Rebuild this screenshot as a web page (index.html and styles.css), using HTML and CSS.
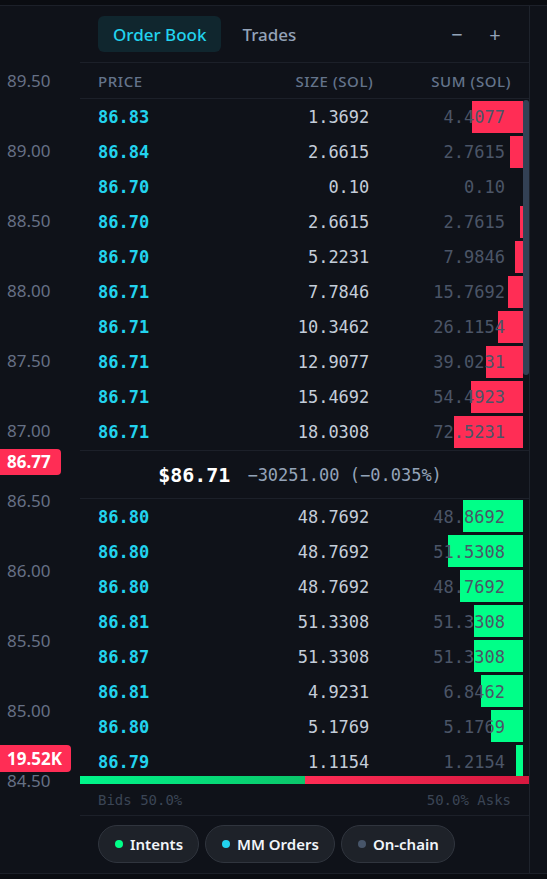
FILE: index.html
```html
<!DOCTYPE html>
<html lang="en">
  <head>
    <meta charset="UTF-8" />
    <meta name="viewport" content="width=device-width, initial-scale=1.0" />
    <title>Order Book</title>
    <link rel="stylesheet" href="styles.css">
  </head>
  <body>
    <div class="screen">
      <aside class="axis">
        <span class="tick">89.50</span>
        <span class="tick">89.00</span>
        <span class="tick">88.50</span>
        <span class="tick">88.00</span>
        <span class="tick">87.50</span>
        <span class="tick">87.00</span>
        <span class="tick">86.50</span>
        <span class="tick">86.00</span>
        <span class="tick">85.50</span>
        <span class="tick">85.00</span>
        <span class="tick">84.50</span>
        <span class="tag tag-price">86.77</span>
        <span class="tag tag-vol">19.52K</span>
      </aside>

      <section class="book">
        <header class="book-tabs">
          <button class="tab active">Order Book</button>
          <button class="tab">Trades</button>
          <div class="zoom-btns">
            <button>−</button>
            <button>+</button>
          </div>
        </header>

        <div class="cols">
          <span>PRICE</span>
          <span>SIZE (SOL)</span>
          <span>SUM (SOL)</span>
        </div>

        <div class="asks-wrap">
          <div class="rows asks">
            <div class="row"><i class="depth" style="width:51px"></i><span class="price">86.83</span><span class="size">1.3692</span><span class="sum">4.4077</span></div>
            <div class="row"><i class="depth" style="width:13px"></i><span class="price">86.84</span><span class="size">2.6615</span><span class="sum">2.7615</span></div>
            <div class="row"><i class="depth" style="width:0px"></i><span class="price">86.70</span><span class="size">0.10</span><span class="sum">0.10</span></div>
            <div class="row"><i class="depth" style="width:3px"></i><span class="price">86.70</span><span class="size">2.6615</span><span class="sum">2.7615</span></div>
            <div class="row"><i class="depth" style="width:8px"></i><span class="price">86.70</span><span class="size">5.2231</span><span class="sum">7.9846</span></div>
            <div class="row"><i class="depth" style="width:15px"></i><span class="price">86.71</span><span class="size">7.7846</span><span class="sum">15.7692</span></div>
            <div class="row"><i class="depth" style="width:25px"></i><span class="price">86.71</span><span class="size">10.3462</span><span class="sum">26.1154</span></div>
            <div class="row"><i class="depth" style="width:37px"></i><span class="price">86.71</span><span class="size">12.9077</span><span class="sum">39.0231</span></div>
            <div class="row"><i class="depth" style="width:52px"></i><span class="price">86.71</span><span class="size">15.4692</span><span class="sum">54.4923</span></div>
            <div class="row"><i class="depth" style="width:69px"></i><span class="price">86.71</span><span class="size">18.0308</span><span class="sum">72.5231</span></div>
          </div>
          <div class="scroll"><i class="thumb"></i></div>
        </div>

        <div class="spread">
          <span class="last">$86.71</span>
          <span class="change">−30251.00 (−0.035%)</span>
        </div>

        <div class="rows bids">
          <div class="row"><i class="depth" style="width:60px"></i><span class="price">86.80</span><span class="size">48.7692</span><span class="sum">48.8692</span></div>
          <div class="row"><i class="depth" style="width:75px"></i><span class="price">86.80</span><span class="size">48.7692</span><span class="sum">51.5308</span></div>
          <div class="row"><i class="depth" style="width:63px"></i><span class="price">86.80</span><span class="size">48.7692</span><span class="sum">48.7692</span></div>
          <div class="row"><i class="depth" style="width:49px"></i><span class="price">86.81</span><span class="size">51.3308</span><span class="sum">51.3308</span></div>
          <div class="row"><i class="depth" style="width:49px"></i><span class="price">86.87</span><span class="size">51.3308</span><span class="sum">51.3308</span></div>
          <div class="row"><i class="depth" style="width:42px"></i><span class="price">86.81</span><span class="size">4.9231</span><span class="sum">6.8462</span></div>
          <div class="row"><i class="depth" style="width:32px"></i><span class="price">86.80</span><span class="size">5.1769</span><span class="sum">5.1769</span></div>
          <div class="row"><i class="depth" style="width:7px"></i><span class="price">86.79</span><span class="size">1.1154</span><span class="sum">1.2154</span></div>
        </div>

        <div class="ratio">
          <div class="ratio-bid" style="width:50%"></div>
          <div class="ratio-ask"></div>
        </div>
        <div class="ratio-labels">
          <span>Bids 50.0%</span>
          <span>50.0% Asks</span>
        </div>

        <footer class="sources">
          <span class="chip"><i class="dot dot-intents"></i>Intents</span>
          <span class="chip"><i class="dot dot-mm"></i>MM Orders</span>
          <span class="chip"><i class="dot dot-chain"></i>On-chain</span>
        </footer>
      </section>
    </div>
  </body>
</html>
```

FILE: styles.css
```css
body {
  background-color: #0a0c11;
  margin: 0;
  font-family: "Noto Sans", sans-serif;
}
.screen {
  display: flex;
  height: 867px;
  margin-top: 5px;
  background-color: #0f1219;
  border-top: 1px solid #1c2029;
  border-bottom: 1px solid #1c2029;
}

/* price axis on the left */
.axis {
  position: relative;
  width: 80px;
  padding-top: 40px;
  display: flex;
  flex-direction: column;
}
.tick {
  height: 70px;
  line-height: 70px;
  padding-left: 7px;
  font-size: 17px;
  color: #667085;
}
.tag {
  position: absolute;
  left: 0;
  padding: 0 10px 0 7px;
  background-color: #ff2d55;
  color: white;
  font-size: 17px;
  font-weight: 700;
  border-radius: 0 4px 4px 0;
}
.tag-price {
  top: 443px;
  height: 26px;
  line-height: 26px;
}
.tag-vol {
  top: 739px;
  height: 27px;
  line-height: 27px;
  padding-right: 9px;
}

/* order book panel */
.book {
  width: 449px;
  display: flex;
  flex-direction: column;
  border-right: 1px solid #1e232c;
}
.book-tabs {
  height: 56px;
  display: flex;
  align-items: center;
  gap: 6px;
  padding: 0 20px 0 18px;
  border-bottom: 1px solid #1c2029;
}
.tab {
  height: 36px;
  padding: 0 15px;
  border: none;
  border-radius: 6px;
  background: transparent;
  color: #94a3b8;
  font-family: "Noto Sans", sans-serif;
  font-size: 17px;
  font-weight: 500;
}
.tab.active {
  background-color: rgba(34, 211, 238, 0.1);
  color: #22d3ee;
}
.zoom-btns {
  margin-left: auto;
  display: flex;
  gap: 10px;
}
.zoom-btns button {
  width: 28px;
  height: 28px;
  padding: 0;
  border: none;
  background: transparent;
  color: #94a3b8;
  font-family: "Noto Sans", sans-serif;
  font-size: 20px;
}

.cols {
  height: 35px;
  display: grid;
  grid-template-columns: repeat(3, 1fr);
  align-items: center;
  padding: 0 18px;
  font-size: 15px;
  font-weight: 500;
  letter-spacing: 0.6px;
  color: #64748b;
  border-bottom: 1px solid #1c2029;
}
.cols span + span {
  text-align: right;
}

.rows {
  font-family: "DejaVu Sans Mono", monospace;
  font-size: 17px;
}
.asks-wrap {
  height: 351px;
  display: flex;
}
.asks {
  flex: 1;
  overflow: hidden;
}
.scroll {
  width: 6px;
  padding-top: 1px;
}
.thumb {
  display: block;
  height: 275px;
  background-color: #334155;
  border-radius: 3px;
}
.bids {
  height: 277px;
  overflow: hidden;
  padding-right: 6px;
}
.row {
  position: relative;
  height: 35px;
  display: grid;
  grid-template-columns: repeat(3, 1fr);
  align-items: center;
  padding: 0 18px;
}
.row span {
  position: relative;
}
.depth {
  position: absolute;
  right: 0;
  top: 2px;
  height: 32px;
  background-color: #ff2d55;
}
.bids .depth {
  top: 1px;
  background-color: #00ff88;
}
.price {
  color: #22d3ee;
  font-weight: 700;
}
.size {
  text-align: right;
  color: #c4cdd9;
}
.sum {
  text-align: right;
  color: #4b5567;
}

.spread {
  height: 47px;
  display: flex;
  justify-content: center;
  align-items: center;
  gap: 17px;
  padding-right: 9px;
  border-top: 1px solid #1c2029;
  border-bottom: 1px solid #1c2029;
  font-family: "DejaVu Sans Mono", monospace;
}
.last {
  font-size: 20px;
  font-weight: 700;
  color: white;
}
.change {
  font-size: 17px;
  color: #94a3b8;
}

.ratio {
  height: 8px;
  display: flex;
}
.ratio-bid {
  background: linear-gradient(90deg, #00f58a, #0bc66a);
}
.ratio-ask {
  flex: 1;
  background: linear-gradient(90deg, #ff2d55, #d6183f);
}
.ratio-labels {
  height: 31px;
  display: flex;
  justify-content: space-between;
  align-items: center;
  padding: 0 18px;
  font-family: "DejaVu Sans Mono", monospace;
  font-size: 14px;
  color: #3b4555;
  border-bottom: 1px solid #1c2029;
}

.sources {
  display: flex;
  gap: 6px;
  padding: 9px 18px;
}
.chip {
  height: 36px;
  display: flex;
  align-items: center;
  gap: 7px;
  padding: 0 15px 0 16px;
  border: 1px solid #30353e;
  border-radius: 19px;
  background-color: #1e2229;
  color: #f1f5f9;
  font-size: 15px;
  font-weight: 600;
}
.dot {
  width: 8px;
  height: 8px;
  border-radius: 50%;
}
.dot-intents {
  background-color: #00ff88;
}
.dot-mm {
  background-color: #22d3ee;
}
.dot-chain {
  background-color: #475569;
}
```
